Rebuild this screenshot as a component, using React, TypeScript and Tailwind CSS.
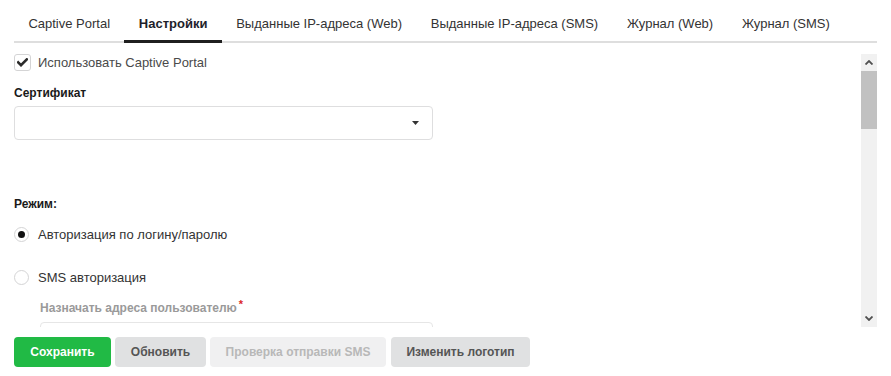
import React from "react";

const tabs = [
  "Captive Portal",
  "Настройки",
  "Выданные IP-адреса (Web)",
  "Выданные IP-адреса (SMS)",
  "Журнал (Web)",
  "Журнал (SMS)",
];

function Check() {
  return (
    <span className="flex h-[17px] w-[17px] shrink-0 items-center justify-center rounded-[3px] border border-[#d4d4d5] bg-white">
      <svg width="11" height="9" viewBox="0 0 11 9">
        <path d="M1.2 4.4 L4 7.2 L9.8 1.4" fill="none" stroke="#2b2b2b" strokeWidth="2.6" strokeLinecap="square" />
      </svg>
    </span>
  );
}

function Radio({ checked }: { checked?: boolean }) {
  return (
    <span className="flex h-[15px] w-[15px] shrink-0 items-center justify-center rounded-full border border-[#d4d4d5] bg-white">
      {checked && <span className="h-[7px] w-[7px] rounded-full bg-[#111]" />}
    </span>
  );
}

export default function App() {
  return (
    <div
      className="h-[376px] w-[891px] overflow-hidden bg-white px-[14px]"
      style={{ fontFamily: '"Liberation Sans", Arial, sans-serif' }}
    >
      {/* Tabs */}
      <div className="flex border-b-2 border-[#dedede]">
        {tabs.map((t, i) => (
          <div
            key={t}
            className={
              "-mb-[2px] border-b-[3px] px-[14.4px] pt-[16px] pb-[9px] text-[13px] leading-[15px] " +
              (i === 1 ? "border-[#1f1f1f] font-bold text-[#1e1e2a]" : "border-transparent text-[#333]")
            }
          >
            {t}
          </div>
        ))}
      </div>

      {/* Scroll area */}
      <div className="mt-[11px] flex h-[273px]">
        <div className="flex-1 overflow-hidden">
          <div className="flex h-[17px] items-center gap-[7px]">
            <Check />
            <span className="text-[13px] leading-[15px] text-[#4a4a4a]">Использовать Captive Portal</span>
          </div>

          <div className="mt-[15px] text-[12px] font-bold leading-[14px] text-[#1a1a1a]">Сертификат</div>
          <div className="mt-[6px] flex h-[34px] w-[419px] items-center justify-end rounded-[4px] border border-[#dededf] pr-[13px]">
            <svg width="7" height="4" viewBox="0 0 7 4">
              <path d="M0 0 H7 L3.5 4 Z" fill="#333" />
            </svg>
          </div>

          <div className="mt-[57px] text-[12px] font-bold leading-[14px] text-[#1a1a1a]">Режим:</div>

          <div className="mt-[15px] flex h-[17px] items-center gap-[9px]">
            <Radio checked />
            <span className="text-[13px] leading-[15px] text-[#333]">Авторизация по логину/паролю</span>
          </div>

          <div className="mt-[26px] flex h-[17px] items-center gap-[9px]">
            <Radio />
            <span className="text-[13px] leading-[15px] text-[#333]">SMS авторизация</span>
          </div>

          <div className="mt-[15px] pl-[26px] text-[12px] font-bold leading-[14px] text-[#9a9a9a]">
            Назначать адреса пользователю
            <span className="relative -top-[4px] ml-[2px] text-[11px] text-[#db2828]">*</span>
          </div>
          <div className="ml-[26px] mt-[7px] h-[34px] w-[393px] rounded-[4px] border border-[#e6e6e6]" />
        </div>

        {/* Scrollbar */}
        <div className="flex w-[16px] flex-col bg-[#f1f1f1]">
          <div className="flex h-[17px] items-center justify-center">
            <svg width="8" height="5" viewBox="0 0 8 5">
              <path d="M0.5 4.5 L4 1 L7.5 4.5" fill="none" stroke="#505050" strokeWidth="1.8" />
            </svg>
          </div>
          <div className="h-[58px] bg-[#c1c1c1]" />
          <div className="flex-1" />
          <div className="flex h-[17px] items-center justify-center">
            <svg width="8" height="5" viewBox="0 0 8 5">
              <path d="M0.5 0.5 L4 4 L7.5 0.5" fill="none" stroke="#505050" strokeWidth="1.8" />
            </svg>
          </div>
        </div>
      </div>

      {/* Buttons */}
      <div className="mt-[10px] flex gap-[4px] text-[12px] font-bold">
        <button className="flex h-[30px] w-[97px] items-center justify-center rounded-[4px] bg-[#21ba45] text-white">
          Сохранить
        </button>
        <button className="flex h-[30px] w-[91px] items-center justify-center rounded-[4px] bg-[#e0e1e2] text-[#555]">
          Обновить
        </button>
        <button className="flex h-[30px] w-[176px] items-center justify-center rounded-[4px] bg-[#f0f0f1] text-[#b8b8b8]">
          Проверка отправки SMS
        </button>
        <button className="ml-[1px] flex h-[30px] w-[139px] items-center justify-center rounded-[4px] bg-[#e0e1e2] text-[#555]">
          Изменить логотип
        </button>
      </div>
    </div>
  );
}
